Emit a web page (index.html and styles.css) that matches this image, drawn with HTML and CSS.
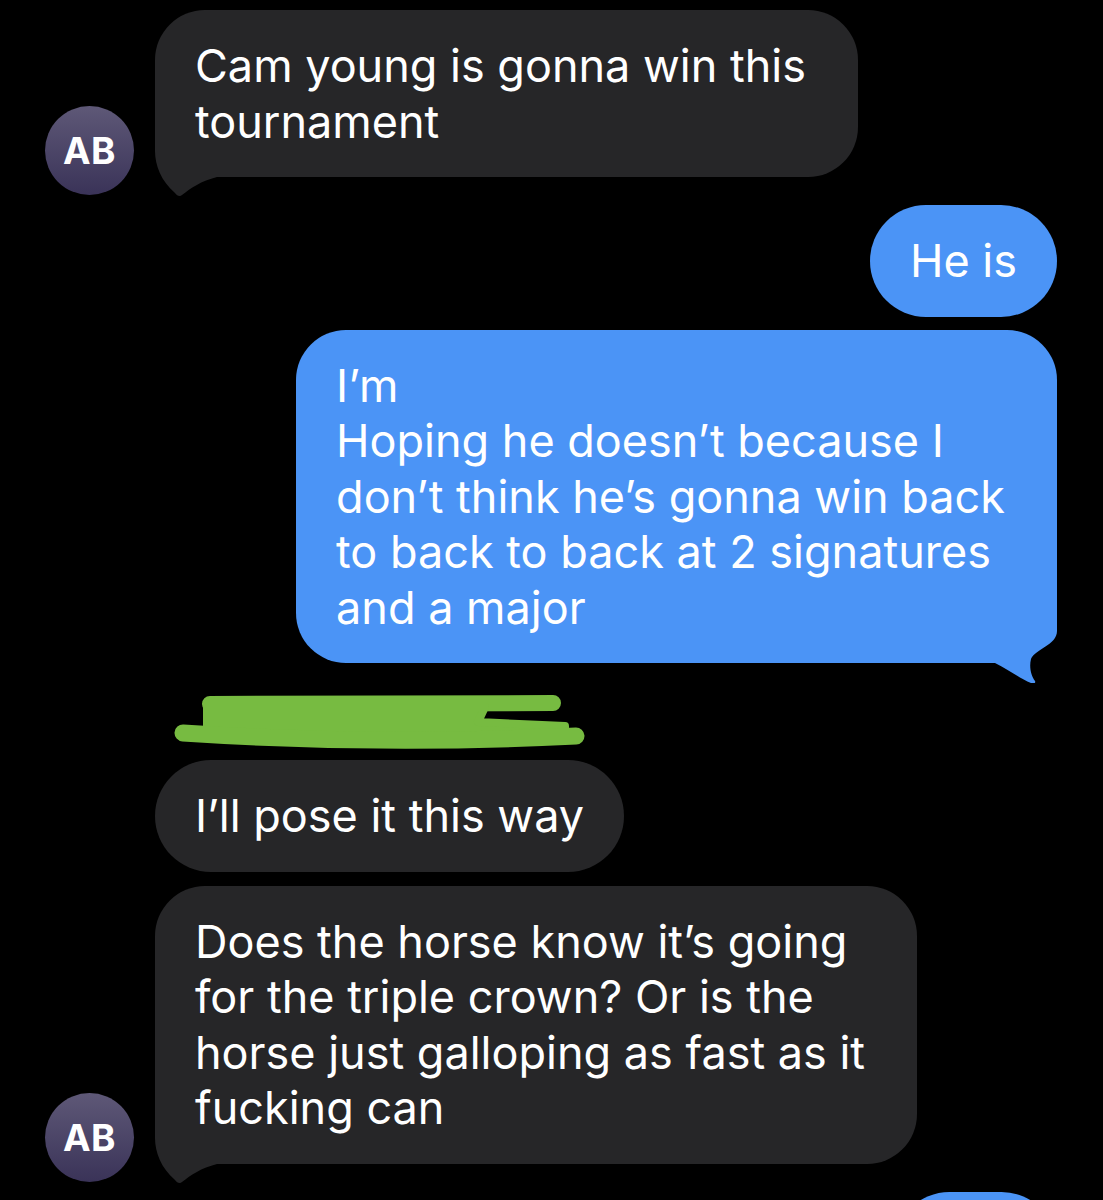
FILE: index.html
```html
<!DOCTYPE html>
<html lang="en">
<head>
<meta charset="utf-8">
<title>Messages</title>
<link rel="stylesheet" href="styles.css">
</head>
<body>
<main class="thread">
  <div class="row in first">
    <div class="avatar">AB</div>
    <div class="bubble gray has-tail multi"><span class="text">Cam young is gonna win this<br>tournament</span><svg class="tail tail-left" viewBox="0 -70 62 90" width="62" height="90"><path d="M0,-70 L0,-26 C0,-12 6,4 20,16 C22,19 25,20 27,18 C36,11 46,4 62,0 L62,-70 Z"/></svg></div>
  </div>

  <div class="row out he-is">
    <div class="bubble blue pill"><span class="text">He is</span></div>
  </div>

  <div class="row out long">
    <div class="bubble blue has-tail multi"><span class="text">I’m<br>Hoping he doesn’t because I<br>don’t think he’s gonna win back<br>to back to back at 2 signatures<br>and a major</span><svg class="tail tail-right" viewBox="-62 -70 62 90" width="62" height="90"><path d="M0,-70 L0,-32 C0,-18 -22,-14 -26,-4 C-28,4 -26,13 -22,18 C-21,20 -23,21 -26,20 C-36,16 -46,8 -62,0 L-62,-70 Z"/></svg></div>
  </div>

  <div class="scribble-row">
    <svg class="scribble" viewBox="0 0 425 56" width="425" height="56">
      <line x1="45" y1="11" x2="388" y2="10" stroke-width="16"/>
      <polygon class="fill" points="42,14 320,14 313,29 400,33 400,42 42,42"/>
      <path d="M18,40 Q215,53 411,43" stroke-width="17" fill="none"/>
    </svg>
  </div>

  <div class="row in pose">
    <div class="avatar-space"></div>
    <div class="bubble gray pill"><span class="text">I’ll pose it this way</span></div>
  </div>

  <div class="row in horse">
    <div class="avatar">AB</div>
    <div class="bubble gray has-tail multi"><span class="text">Does the horse know it’s going<br>for the triple crown? Or is the<br>horse just galloping as fast as it<br>fucking can</span><svg class="tail tail-left" viewBox="0 -70 62 90" width="62" height="90"><path d="M0,-70 L0,-26 C0,-12 6,4 20,16 C22,19 25,20 27,18 C36,11 46,4 62,0 L62,-70 Z"/></svg></div>
  </div>

  <div class="row out next">
    <div class="bubble blue pill stub"></div>
  </div>
</main>
</body>
</html>
```

FILE: styles.css
```css
html, body {
  margin: 0;
  padding: 0;
  background: #000;
}

body {
  width: 1103px;
  height: 1200px;
  overflow: hidden;
  font-family: "Inter", "Liberation Sans", Arial, sans-serif;
  color: #fff;
}

.thread {
  display: flex;
  flex-direction: column;
  padding-top: 10px;
}

.row {
  display: flex;
  align-items: flex-end;
}

.row.in {
  padding-left: 45px;
  gap: 21px;
}

.row.out {
  justify-content: flex-end;
  padding-right: 46px;
}

.avatar,
.avatar-space {
  flex: 0 0 89px;
  width: 89px;
  height: 89px;
}

.avatar {
  border-radius: 50%;
  background: linear-gradient(180deg, #5e5877 0%, #3a3358 100%);
  display: flex;
  align-items: center;
  justify-content: center;
  font-size: 37px;
  font-weight: 700;
  letter-spacing: 0.5px;
  color: #fff;
}

.bubble {
  position: relative;
  padding: 28px 40px 28px;
  font-size: 45px;
  line-height: 55.5px;
  white-space: nowrap;
  border-radius: 50px;
}

.bubble.multi {
  padding-right: 52px;
}

.bubble .text {
  position: relative;
  z-index: 1;
}

.bubble.pill {
  border-radius: 56px;
}

.bubble.gray {
  background: #262628;
}

.bubble.blue {
  background: #4b94f6;
}

.bubble.has-tail {
  margin-bottom: 18px;
}

.bubble.gray.has-tail {
  border-bottom-left-radius: 60px;
}

.bubble.blue.has-tail {
  border-bottom-right-radius: 60px;
}

.tail {
  position: absolute;
  bottom: -20px;
  display: block;
}

.tail-left {
  left: 0;
  fill: #262628;
}

.tail-right {
  right: 0;
  fill: #4b94f6;
}

.row.he-is {
  margin-top: 10px;
}

.row.long {
  margin-top: 13px;
}

.scribble-row {
  margin-top: 12px;
  padding-left: 165px;
  height: 56px;
}

.scribble {
  display: block;
  stroke: #77bb41;
  stroke-linecap: round;
  stroke-linejoin: round;
}

.scribble .fill {
  fill: #77bb41;
  stroke: #77bb41;
  stroke-width: 8;
}

.row.pose {
  margin-top: 11px;
}

.row.horse {
  margin-top: 14px;
}

.row.next {
  margin-top: 10px;
}

.bubble.stub {
  width: 83px;
  height: 55.5px;
}
```
